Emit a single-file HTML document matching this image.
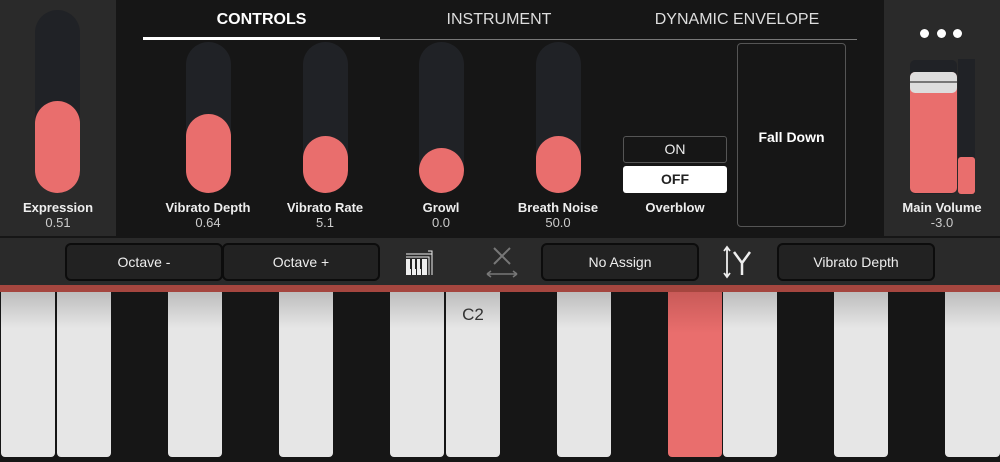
<!DOCTYPE html>
<html><head><style>
*{margin:0;padding:0;box-sizing:border-box}
body{width:1000px;height:462px;background:#161616;font-family:"Liberation Sans",sans-serif;position:relative;overflow:hidden;color:#fff}
.a{position:absolute}
.tr{position:absolute;background:#202226;border-radius:23px;width:45px}
.fl{position:absolute;left:0;right:0;bottom:0;background:#e96e6d;border-radius:23px}
.lb{position:absolute;width:120px;text-align:center;font-size:13px;font-weight:bold;color:#eee}
.vl{position:absolute;width:120px;text-align:center;font-size:13px;color:#ccc}
.tab{position:absolute;top:11px;font-size:16px;color:#ddd;text-align:center}
.btn{position:absolute;top:243px;height:38px;background:#222;border:2px solid #0c0c0c;border-radius:6px;color:#eee;font-size:14px;display:flex;align-items:center;justify-content:center}
.w{position:absolute;top:292px;height:165px;background:linear-gradient(#bdbdbd,#e6e6e6 22%,#e6e6e6);border-radius:0 0 4px 4px}
</style></head><body>
<div class="a" style="left:0;top:0;width:116px;height:236px;background:#2a2a2a"></div>
<div class="a" style="left:884px;top:0;width:116px;height:236px;background:#2a2a2a"></div>
<div class="a" style="left:0;top:238px;width:1000px;height:47px;background:#2a2a2a"></div>

<div class="tr" style="left:35px;top:10px;height:183px"><div class="fl" style="height:92px"></div></div>
<div class="lb" style="left:-2px;top:200px">Expression</div><div class="vl" style="left:-2px;top:215px">0.51</div>

<div class="tab" style="left:143px;width:237px;font-weight:bold;color:#fff">CONTROLS</div>
<div class="tab" style="left:380px;width:238px">INSTRUMENT</div>
<div class="tab" style="left:618px;width:238px">DYNAMIC ENVELOPE</div>
<div class="a" style="left:143px;top:39px;width:714px;height:1px;background:#777"></div>
<div class="a" style="left:143px;top:37px;width:237px;height:3px;background:#fff"></div>

<div class="tr" style="left:186px;top:42px;height:151px"><div class="fl" style="height:79px"></div></div>
<div class="lb" style="left:148px;top:200px">Vibrato Depth</div><div class="vl" style="left:148px;top:215px">0.64</div>
<div class="tr" style="left:303px;top:42px;height:151px"><div class="fl" style="height:57px"></div></div>
<div class="lb" style="left:265px;top:200px">Vibrato Rate</div><div class="vl" style="left:265px;top:215px">5.1</div>
<div class="tr" style="left:419px;top:42px;height:151px"><div class="fl" style="height:45px"></div></div>
<div class="lb" style="left:381px;top:200px">Growl</div><div class="vl" style="left:381px;top:215px">0.0</div>
<div class="tr" style="left:536px;top:42px;height:151px"><div class="fl" style="height:57px"></div></div>
<div class="lb" style="left:498px;top:200px">Breath Noise</div><div class="vl" style="left:498px;top:215px">50.0</div>

<div class="a" style="left:623px;top:136px;width:104px;height:27px;border:1.5px solid #555;border-radius:3px;font-size:14px;text-align:center;line-height:25px;color:#eee">ON</div>
<div class="a" style="left:623px;top:166px;width:104px;height:27px;background:#fff;border-radius:3px;font-size:14px;text-align:center;line-height:27px;color:#222;font-weight:bold">OFF</div>
<div class="lb" style="left:615px;top:200px">Overblow</div>
<div class="a" style="left:737px;top:43px;width:109px;height:184px;border:1.5px solid #555;border-radius:4px;font-size:14px;font-weight:bold;text-align:center;padding-top:85px">Fall Down</div>

<div class="a" style="left:920px;top:29px;width:9px;height:9px;border-radius:50%;background:#fff"></div>
<div class="a" style="left:937px;top:29px;width:9px;height:9px;border-radius:50%;background:#fff"></div>
<div class="a" style="left:953px;top:29px;width:9px;height:9px;border-radius:50%;background:#fff"></div>
<div class="a" style="left:910px;top:60px;width:47px;height:134px;background:#202226;border-radius:5px"></div>
<div class="a" style="left:910px;top:72px;width:47px;height:121px;background:#e96e6d;border-radius:5px"></div>
<div class="a" style="left:910px;top:72px;width:47px;height:21px;background:#ddd;border-radius:5px"></div>
<div class="a" style="left:910px;top:81px;width:47px;height:2px;background:#777"></div>
<div class="a" style="left:958px;top:59px;width:17px;height:135px;background:#202226"></div>
<div class="a" style="left:958px;top:157px;width:17px;height:37px;background:#e96e6d;border-radius:3px"></div>
<div class="lb" style="left:882px;top:200px">Main Volume</div><div class="vl" style="left:882px;top:215px">-3.0</div>

<div class="btn" style="left:65px;width:158px">Octave -</div>
<div class="btn" style="left:222px;width:158px">Octave +</div>
<svg class="a" style="left:404px;top:249px" width="30" height="28" viewBox="0 0 30 28"><rect x="2" y="10" width="21" height="16" fill="#eee"/><g fill="#222"><rect x="6" y="10" width="2" height="10"/><rect x="11" y="10" width="2" height="10"/><rect x="16" y="10" width="2" height="10"/><rect x="7" y="20" width="1" height="6"/><rect x="12" y="20" width="1" height="6"/><rect x="17" y="20" width="1" height="6"/></g><path d="M2 8H25V26M2 5H28V26M24 2H28V5" stroke="#eee" stroke-width="1" fill="none"/></svg>
<svg class="a" style="left:484px;top:245px" width="36" height="36" viewBox="0 0 36 36"><path d="M10 3L26 19M26 3L10 19" stroke="#777" stroke-width="2"/><path d="M3 29H33M3 29l4-3M3 29l4 3M33 29l-4-3M33 29l-4 3" stroke="#777" stroke-width="1.5" fill="none"/></svg>
<div class="btn" style="left:541px;width:158px">No Assign</div>
<svg class="a" style="left:720px;top:244px" width="36" height="36" viewBox="0 0 36 36"><path d="M7 3V33M4 7l3-4 3 4M4 29l3 4 3-4" stroke="#eee" stroke-width="1.8" fill="none"/><path d="M14 8l8 11 8-11M22 19V31" stroke="#eee" stroke-width="2.5" fill="none"/></svg>
<div class="btn" style="left:777px;width:158px">Vibrato Depth</div>

<div class="a" style="left:0;top:285px;width:1000px;height:7px;background:#a5463f"></div>
<div class="w" style="left:1px;width:54px"></div>
<div class="w" style="left:57px;width:54px"></div>
<div class="w" style="left:168px;width:54px"></div>
<div class="w" style="left:279px;width:54px"></div>
<div class="w" style="left:390px;width:54px"></div>
<div class="w" style="left:446px;width:54px"></div>
<div class="a" style="left:446px;top:305px;width:54px;text-align:center;font-size:17px;color:#333">C2</div>
<div class="w" style="left:557px;width:54px"></div>
<div class="w" style="left:668px;width:54px;background:linear-gradient(#c95a58,#e96e6d 25%,#e96e6d)"></div>
<div class="w" style="left:723px;width:54px"></div>
<div class="w" style="left:834px;width:54px"></div>
<div class="w" style="left:945px;width:55px"></div>
</body></html>
